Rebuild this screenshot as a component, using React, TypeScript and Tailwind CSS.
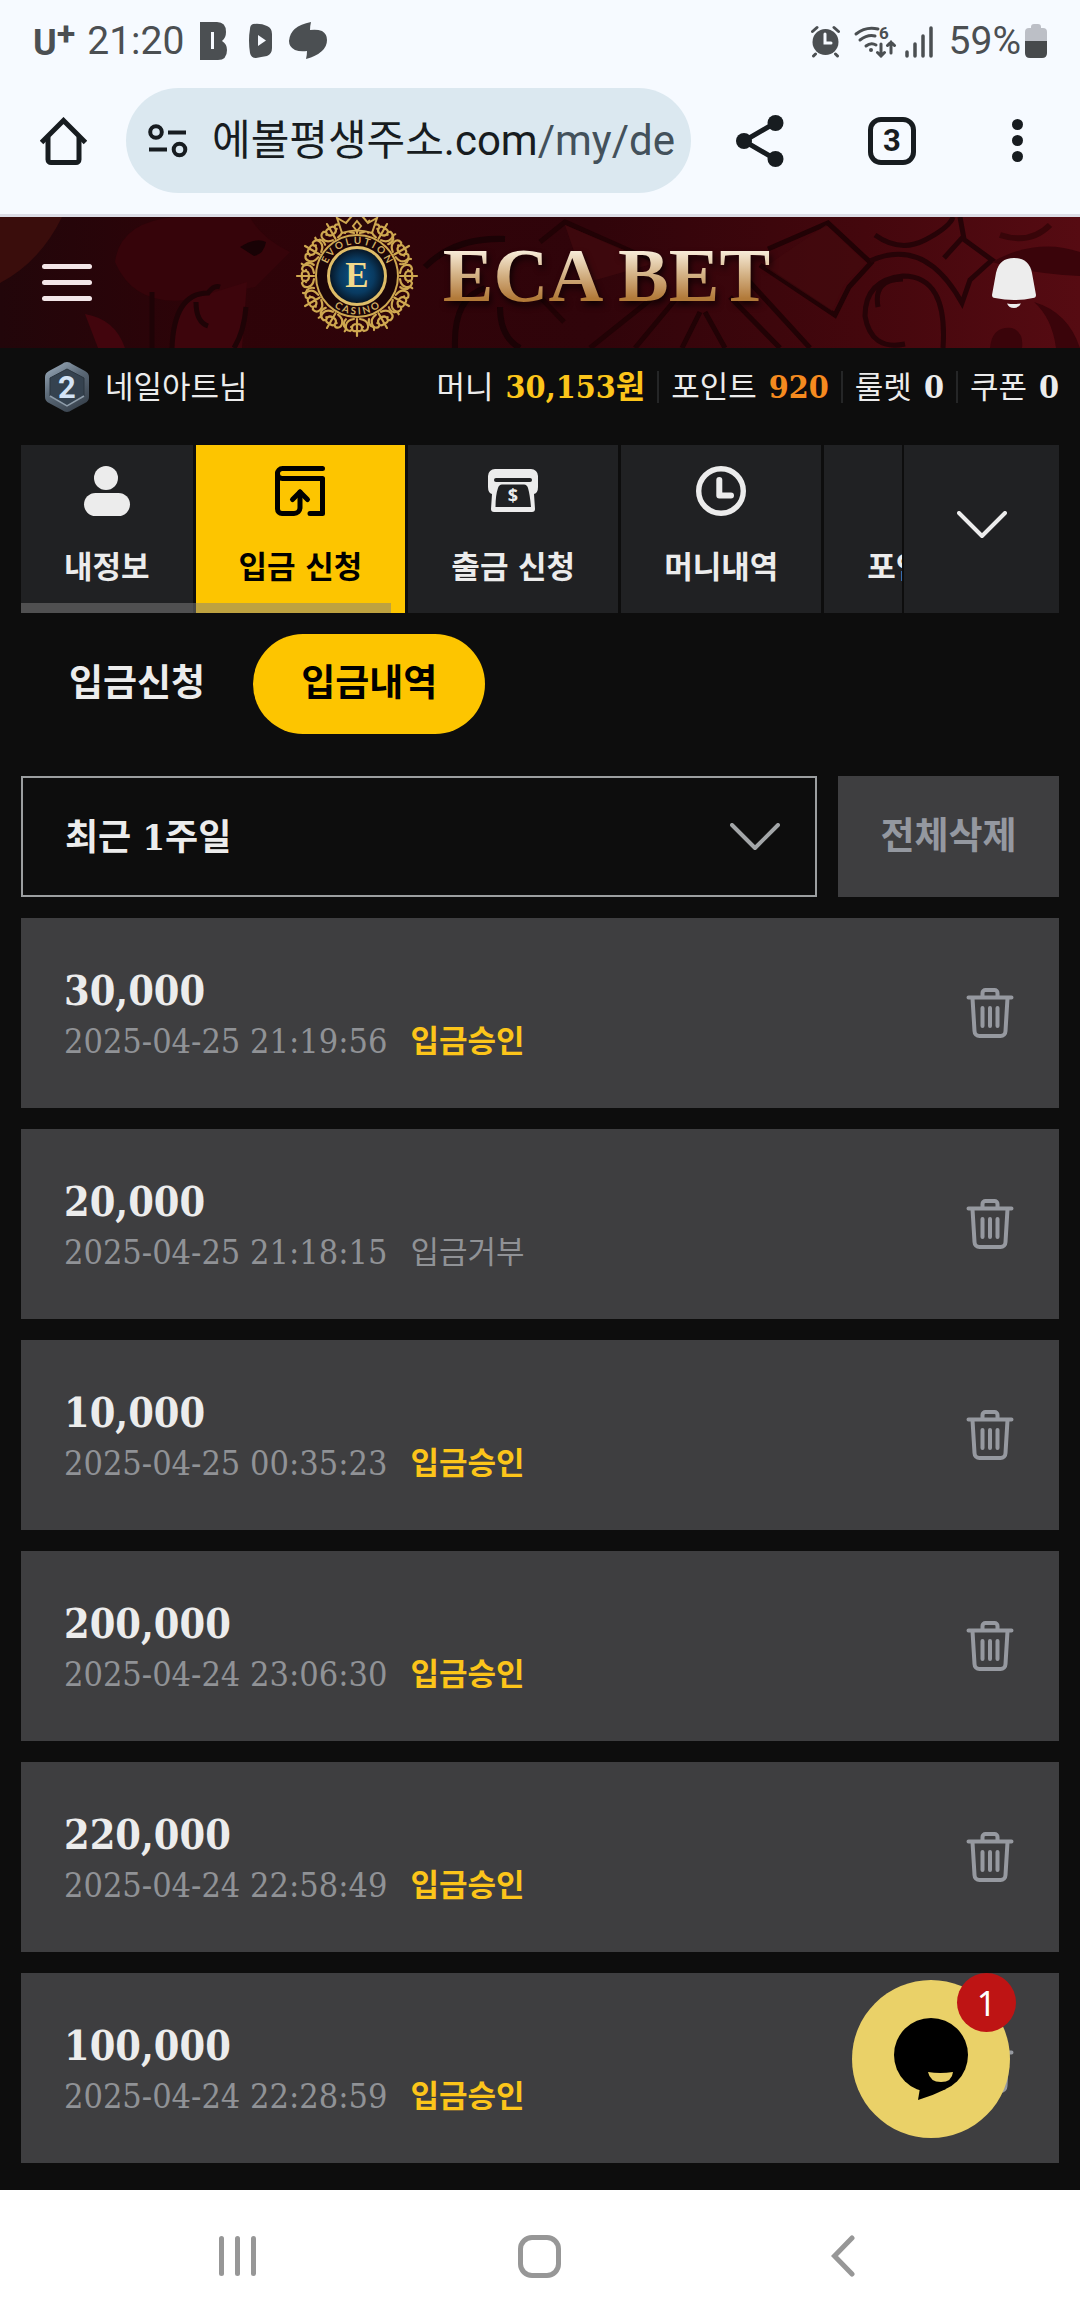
import type { ReactNode } from 'react';

interface Deposit {
  amount: string;
  date: string;
  approved: boolean;
}

interface Tab {
  label: string;
  icon?: ReactNode;
  active?: boolean;
}

const deposits: Deposit[] = [
  { amount: '30,000', date: '2025-04-25 21:19:56', approved: true },
  { amount: '20,000', date: '2025-04-25 21:18:15', approved: false },
  { amount: '10,000', date: '2025-04-25 00:35:23', approved: true },
  { amount: '200,000', date: '2025-04-24 23:06:30', approved: true },
  { amount: '220,000', date: '2025-04-24 22:58:49', approved: true },
  { amount: '100,000', date: '2025-04-24 22:28:59', approved: true },
];

const balances = [
  { label: '머니', value: '30,153원', color: 'text-[#fcc51a]' },
  { label: '포인트', value: '920', color: 'text-[#f58a1f]' },
  { label: '룰렛', value: '0', color: 'text-[#ececec]' },
  { label: '쿠폰', value: '0', color: 'text-[#ececec]' },
];

function PersonIcon() {
  return (
    <svg width="50" height="50" viewBox="0 0 50 50" fill="currentColor" aria-hidden="true">
      <circle cx="24" cy="12" r="12" />
      <rect x="2" y="27" width="46" height="23" rx="11.5" />
    </svg>
  );
}

function DepositIcon() {
  return (
    <svg width="50" height="50" viewBox="0 0 50 50" fill="none" stroke="currentColor" strokeWidth="5" strokeLinecap="round" strokeLinejoin="round" aria-hidden="true">
      <path d="M47.5 2.5H7.5a5 5 0 0 0 0 10h40v35H35" />
      <path d="M2.5 7.5V43a4.5 4.5 0 0 0 4.5 4.5h12a6 6 0 0 0 6-6V26" />
      <path d="M17.5 33.5L25 26l7.5 7.5" />
    </svg>
  );
}

function WithdrawIcon() {
  return (
    <svg width="50" height="50" viewBox="0 0 50 50" aria-hidden="true">
      <path d="M7 3h36a7 7 0 0 1 7 7v11q0 6-4 7l1 15a3 3 0 0 1-3 3H6a3 3 0 0 1-3-3l1-15q-4-1-4-7V10a7 7 0 0 1 7-7z" fill="currentColor" />
      <rect x="6" y="12" width="38" height="4" rx="2" fill="#202123" />
      <path d="M14 18.5h22q3 0 4 3.5 2 7 3 19H7.5q0-12 2.5-19 1-3.5 4-3.5z" fill="#202123" />
      <text x="25" y="36" textAnchor="middle" fill="currentColor" className="font-['Open_Sans',sans-serif] text-[18px] font-bold">$</text>
    </svg>
  );
}

function ClockIcon() {
  return (
    <svg width="50" height="50" viewBox="0 0 50 50" fill="none" stroke="currentColor" strokeLinecap="round" strokeLinejoin="round" aria-hidden="true">
      <circle cx="25" cy="25" r="22.3" strokeWidth="5.4" />
      <path d="M23.3 14v15.5H35" strokeWidth="6" />
    </svg>
  );
}

function ChevronDown() {
  return (
    <svg width="50" height="28" viewBox="0 0 50 28" fill="none" stroke="currentColor" strokeWidth="4" strokeLinecap="round" strokeLinejoin="round" aria-hidden="true">
      <path d="M2 2l23 23L48 2" />
    </svg>
  );
}

function TrashIcon() {
  return (
    <svg width="48" height="50" viewBox="0 0 48 50" fill="none" stroke="currentColor" strokeWidth="4" strokeLinecap="round" strokeLinejoin="round" aria-hidden="true">
      <path d="M2.5 9.5h43M16.5 9V5a3 3 0 0 1 3-3h9a3 3 0 0 1 3 3v4" />
      <path d="M6.5 10l2 33a5 5 0 0 0 5 5h21a5 5 0 0 0 5-5l2-33M16.5 20v18M24 20v18M31.5 20v18" />
    </svg>
  );
}

const tabs: Tab[] = [
  { label: '내정보', icon: <PersonIcon /> },
  { label: '입금 신청', icon: <DepositIcon />, active: true },
  { label: '출금 신청', icon: <WithdrawIcon /> },
  { label: '머니내역', icon: <ClockIcon /> },
  { label: '포인트내역' },
];

function StatusBar() {
  return (
    <div className="flex h-[82px] items-center justify-between px-[33px] text-[39px] leading-none text-[#4b4f52]">
      <div className="flex items-center">
        <span className="mt-1 text-[36px] font-bold">U</span>
        <span className="-mt-4 mr-3 text-[34px] font-bold">+</span>
        <span>21:20</span>
        <svg className="ml-4" width="128" height="38" viewBox="0 0 128 38" fill="currentColor" aria-hidden="true">
          <path fillRule="evenodd" d="M0 0h17q9 0 9 10 0 6-4 9 5 3 5 9 0 10-9 10H0zM11 10v17h3V10z" />
          <path fillRule="evenodd" d="M53 2q8-1 14 2 5 2 5 8v14q0 6-5 8-6 1-11 2-5 0-6-5-2-13 0-24 0-4 3-5zM58 13v11l8-5.5z" />
          <path d="M111 0q-1 4-1 8 7-1 12 1 5 3 5 9 0 13-21 19 1-4 1-8-7 1-12-1-6-3-6-9 1-15 22-19z" />
        </svg>
      </div>
      <div className="flex items-center">
        <svg className="mr-[15px]" width="124" height="34" viewBox="0 0 124 34" fill="none" stroke="currentColor" strokeWidth="3" strokeLinecap="round" aria-hidden="true">
          <circle cx="15.5" cy="18" r="13" fill="currentColor" stroke="none" />
          <path d="M2.5 7.5L7 3.5M24 3.5l4.5 4M5.5 30l-2 2M25.5 30l2 2" />
          <path d="M15 10v9h6" stroke="#f6faff" />
          <path d="M46 10q10-8 22-5M50 16q8-6 15-4M56 22q5-4 10-1" />
          <circle cx="61" cy="26" r="2" fill="currentColor" stroke="none" />
          <text x="69" y="15" fill="currentColor" stroke="none" className="font-[Roboto,sans-serif] text-[17px] font-bold">6</text>
          <path d="M71 20v12M67.5 28.5l3.5 3.5 3.5-3.5M81 29V18M77.5 21.5L81 18l3.5 3.5" />
          <path d="M97 28v4M105 20v12M113 12v20M121 4v28" strokeWidth="3.5" />
        </svg>
        <span>59%</span>
        <svg className="ml-1" width="22" height="34" viewBox="0 0 22 34" aria-hidden="true">
          <path d="M6 3q0-3 3-3h4q3 0 3 3v1h2q4 0 4 4v9H0V8q0-4 4-4h2z" fill="#bcbfc6" />
          <path d="M0 17h22v12q0 5-5 5H5q-5 0-5-5z" fill="#474a4c" />
        </svg>
      </div>
    </div>
  );
}

function AddressBar() {
  return (
    <div className="flex items-center border-b-[3px] border-[#dcdde6] pb-[21px] pl-10 pt-[6px] text-[#171c20]">
      <button type="button" aria-label="홈" className="mr-[39px] shrink-0">
        <svg width="47" height="48" viewBox="0 0 47 48" fill="none" stroke="currentColor" strokeWidth="5" aria-hidden="true">
          <path d="M1.5 25.5l22-22 22 22" />
          <path d="M8 20v22.5a3 3 0 0 0 3 3h25a3 3 0 0 0 3-3V20" />
        </svg>
      </button>
      <button type="button" className="flex h-[105px] min-w-0 flex-1 items-center overflow-hidden rounded-full bg-[#dbe8f0] pl-[22px] text-left">
        <svg className="mr-6 shrink-0" width="40" height="34" viewBox="0 0 40 34" fill="none" stroke="currentColor" strokeWidth="4" aria-hidden="true">
          <circle cx="8" cy="8" r="5.8" />
          <path d="M20 8.5h18M1 25.5h18" />
          <circle cx="31.5" cy="25.5" r="5.8" />
        </svg>
        <span className="whitespace-nowrap text-[42px] leading-[60px]">
          에볼평생주소.com<span className="text-[#43515b]">/my/de</span>
        </span>
      </button>
      <button type="button" aria-label="공유" className="ml-[45px] shrink-0">
        <svg width="48" height="52" viewBox="0 0 48 52" fill="currentColor" aria-hidden="true">
          <path d="M39 8L8 26l31 18" fill="none" stroke="currentColor" strokeWidth="5" />
          <circle cx="8" cy="26" r="8" />
          <circle cx="39.5" cy="8" r="8" />
          <circle cx="39.5" cy="44" r="8" />
        </svg>
      </button>
      <button type="button" aria-label="탭 3개" className="ml-[84px] flex size-12 shrink-0 items-center justify-center rounded-[13px] border-[5px] border-current text-[31px] font-bold leading-none">
        3
      </button>
      <button type="button" aria-label="더보기" className="ml-[96px] mr-[57px] flex shrink-0 flex-col gap-[5px]">
        <span className="size-[11px] rounded-full bg-current" />
        <span className="size-[11px] rounded-full bg-current" />
        <span className="size-[11px] rounded-full bg-current" />
      </button>
    </div>
  );
}

function BannerArt() {
  return (
    <svg className="absolute inset-0 size-full" viewBox="0 0 1080 131" preserveAspectRatio="xMidYMid slice" aria-hidden="true">
      <defs>
        <linearGradient id="banner" x1="0" x2="1" y1="0" y2="0">
          <stop offset="0" stopColor="#22060a" />
          <stop offset="0.2" stopColor="#2e0308" />
          <stop offset="0.55" stopColor="#30040a" />
          <stop offset="0.8" stopColor="#44070d" />
          <stop offset="1" stopColor="#560b12" />
        </linearGradient>
      </defs>
      <rect width="1080" height="131" fill="url(#banner)" />
      <path d="M0 0h62Q40 45 0 66z" fill="#3a0d0c" />
      <path d="M115 45q5-40 60-45h75q10 20 40 35l-35 35-60 12q-60 10-80-37z" fill="#36040a" />
      <path d="M172 131q5-50 30-52l45-14-5 66z" fill="#3d050c" />
      <path d="M85 97q30 5 40 34H98z" fill="#42050d" />
      <path d="M172 131q2-55 36-55 6-8 12-6M152 75v56M246 90q-2 25-12 41M196 85q0 20 12 24" fill="none" stroke="#1e0306" strokeWidth="5" />
      <path d="M240 30q16-10 26-5-2 12-12 14z" fill="#180205" />
      <path d="M425 50q30-30 80-28M455 131q-2-50 30-60M500 90q0 30 20 41" fill="none" stroke="#1b0205" strokeWidth="6" />
      <path d="M540 25l25-20 90 40M760 48l75 50 14-28 22-24L828 6l-60 26M540 80l24 25M590 131l65-52M635 131l40-48M730 80l50 51M745 60l65 71M700 95l-18 36M705 95l20 36" fill="none" stroke="#210205" strokeWidth="5" />
      <path d="M565 8l90 38-70 20zM765 50l67 44 12-26 22-22-40-38z" fill="#430a0e" opacity="0.7" />
      <path d="M870 44q55-25 92 42l8-23 22-20-30-22-18 20M943 131q5-72-40-72-38 4-38 40 6 35 40 28M878 90q-5-28 25-28M875 18q25 18 50 5t28-23M960 0l4 22" fill="none" stroke="#260307" strokeWidth="5" />
      <path d="M992 45q45-25 88-10v24q-50-2-88-14z" fill="#3a040a" />
      <path d="M1034 85q34 10 46 46h-24q-4-30-22-46zM990 131q2-22 22-20 12 4 10 20z" fill="#3a040a" />
      <path d="M1000 18q30 10 50-10" fill="none" stroke="#380509" strokeWidth="6" />
    </svg>
  );
}

function Emblem() {
  const spokes = Array.from({ length: 12 }, (_, i) => i * 30);
  return (
    <svg className="shrink-0" width="124" height="121" viewBox="-62 -59 124 121" fill="none" stroke="#cfa850" strokeLinecap="round" aria-hidden="true">
      <defs>
        <radialGradient id="core">
          <stop offset="0" stopColor="#0b568c" />
          <stop offset="0.6" stopColor="#093a60" />
          <stop offset="1" stopColor="#07121f" />
        </radialGradient>
        <path id="arcTop" d="M-32 0A32 32 0 0 1 32 0" />
        <path id="arcBottom" d="M-38.500 0A38.500 38.500 0 0 0 38.500 0" />
      </defs>
      {spokes.map((angle) => (
        <g key={angle} transform={`rotate(${angle})`} strokeWidth="2.2">
          <path d="M0-60v17M0-55q-5-1-5 3t5 4M0-55q5-1 5 3t-5 4M-3-43q-7-1-8-6t4-6q4 2 1 4M3-43q7-1 8-6t-4-6q-4 2-1 4" />
          <path d="M-12-43q1-4-2-7M-14-50q-4-1-3-4" />
        </g>
      ))}
      <circle r="41" fill="#1c0508" strokeWidth="2" />
      <path d="M-15-43l-5-15 9 5L-6-59l6-5 6 5 5 6 9-5-5 15q-15-5-30 0z" fill="#2a0608" strokeWidth="2" />
      <path d="M0-55l4 5-4 5-4-5z" strokeWidth="2" />
      <circle r="28.5" fill="url(#core)" stroke="#dfbd68" strokeWidth="3" />
      <g fill="#d1ae62" stroke="none" className="font-[Lato,sans-serif] text-[10px] font-bold">
        <text textAnchor="middle"><textPath href="#arcTop" startOffset="50%">E V O L U T I O N</textPath></text>
        <text textAnchor="middle"><textPath href="#arcBottom" startOffset="50%">C A S I N O</textPath></text>
      </g>
      <text y="11" textAnchor="middle" fill="#f3d98c" stroke="none" className="font-['Liberation_Serif',serif] text-[35px] font-bold">E</text>
    </svg>
  );
}

function SiteHeader() {
  return (
    <header className="relative">
      <BannerArt />
      <div className="relative flex h-[131px] items-center justify-between pl-[42px] pr-[33px]">
        <button type="button" aria-label="메뉴" className="flex w-[50px] flex-col gap-[11px]">
          <span className="h-[5px] w-full rounded-full bg-[#f3e6e8]" />
          <span className="h-[5px] w-full rounded-full bg-[#f3e6e8]" />
          <span className="h-[5px] w-full rounded-full bg-[#f3e6e8]" />
        </button>
        <a href="#home" className="flex items-start self-start pr-2">
          <Emblem />
          <span className="ml-6 bg-linear-to-b from-[#f6ead6] from-30% via-[#d3b184] via-50% to-[#b27a39] to-70% bg-clip-text font-['Liberation_Serif',serif] text-[76px] font-bold leading-[116px] text-transparent drop-shadow-[2px_4px_3px_rgba(0,0,0,0.7)]">
            ECA BET
          </span>
        </a>
        <button type="button" aria-label="알림" className="flex w-[66px] justify-center">
          <svg width="44" height="50" viewBox="0 0 44 50" fill="#ededed" aria-hidden="true">
            <path d="M22 0q15 0 18 15l4 22q0 3-3 3-19 4-38 0-3 0-3-3l4-22Q7 0 22 0z" />
            <path d="M15 45.5q7 1 14 0-2 4.5-7 4.5t-7-4.5z" />
          </svg>
        </button>
      </div>
    </header>
  );
}

function LevelBadge() {
  return (
    <svg className="mr-4 shrink-0" width="44" height="50" viewBox="0 0 44 50" aria-hidden="true">
      <defs>
        <linearGradient id="badge" x1="0" y1="0" x2="0.6" y2="1">
          <stop offset="0" stopColor="#a2b2c2" />
          <stop offset="0.5" stopColor="#5d6b79" />
          <stop offset="1" stopColor="#3a444f" />
        </linearGradient>
      </defs>
      <path d="M22 0q3 0 5 2l13 7q4 2 4 6v20q0 4-4 6l-13 7q-5 4-10 0L4 41q-4-2-4-6V15q0-4 4-6l13-7q2-2 5-2z" fill="url(#badge)" />
      <path d="M22 7l17 9v18l-17 10L5 34V16z" fill="#35424f" stroke="#2a343e" strokeWidth="1" />
      <path d="M39 34L22 44 5 34" fill="none" stroke="#8f9daa" strokeWidth="1.5" />
      <text x="22" y="36" textAnchor="middle" fill="#d3e3f5" className="font-['Liberation_Sans_Narrow',Roboto,sans-serif] text-[31px] font-bold">2</text>
    </svg>
  );
}

function BalanceRow() {
  return (
    <div className="flex h-[77px] items-center justify-between whitespace-nowrap pl-[45px] pr-[21px] text-[31px] leading-10">
      <div className="flex items-center">
        <LevelBadge />
        <span>네일아트님</span>
      </div>
      <dl className="flex items-center">
        {balances.map(({ label, value, color }) => (
          <div key={label} className="flex h-8 items-center gap-3 border-l-2 border-[#252627] px-3 first:border-l-0 last:pr-0">
            <dt>{label}</dt>
            <dd className={`text-[32px] font-bold ${color}`}>{value}</dd>
          </div>
        ))}
      </dl>
    </div>
  );
}

function TabBar() {
  return (
    <nav className="mx-[21px] mt-5 flex h-[168px] gap-[2px]">
      <div className="relative flex min-w-0 flex-1 gap-[3px] overflow-hidden">
        {tabs.map(({ label, icon, active }) => (
          <a
            key={label}
            href="#tab"
            className={`flex shrink-0 flex-col items-center whitespace-nowrap px-[43px] pt-[21px] text-[31px] font-bold leading-10 ${active ? 'bg-[#fdc500] text-black' : 'bg-[#202123]'}`}
          >
            <span className="mb-[31px] h-[50px]">{icon}</span>
            {label}
          </a>
        ))}
        <div className="absolute bottom-0 left-0 h-[10px] w-[42%] bg-[#808080]/50" />
      </div>
      <button type="button" aria-label="펼치기" className="flex w-[155px] items-center justify-center bg-[#202123] pb-2">
        <ChevronDown />
      </button>
    </nav>
  );
}

function DepositCard({ amount, date, approved }: Deposit) {
  return (
    <li className="flex items-center justify-between bg-[#3e3e40] pl-[43px] pr-[45px]">
      <div className="pb-[42px] pt-12">
        <p className="text-[41px] font-bold leading-[50px]">{amount}</p>
        <p className="flex gap-[23px] text-[34px] leading-[50px] text-[#909296]">
          <span>{date}</span>
          <span className={`text-[31px] ${approved ? 'font-bold text-[#fcc51a]' : ''}`}>
            {approved ? '입금승인' : '입금거부'}
          </span>
        </p>
      </div>
      <button type="button" aria-label="삭제" className="text-[#9699a0]">
        <TrashIcon />
      </button>
    </li>
  );
}

function ChatButton() {
  return (
    <button type="button" aria-label="채팅" className="absolute bottom-[178px] right-[70px] size-[158px] rounded-full bg-[#ead168]">
      <svg className="mx-auto" width="74" height="82" viewBox="0 0 74 82" aria-hidden="true">
        <circle cx="37" cy="37" r="37" />
        <path d="M26 70l-2 12q14-4 28-11z" />
        <path d="M34 54q12 2 25 0-1 10-12 10T34 54z" fill="#ead168" />
      </svg>
      <span className="absolute -right-[6px] -top-[7px] flex size-[59px] items-center justify-center rounded-full bg-[#be1414] font-['Noto_Sans',sans-serif] text-[34px] leading-none text-white">
        1
      </span>
    </button>
  );
}

function SystemNav() {
  return (
    <nav className="grid h-[126px] grid-cols-3 place-items-center bg-white px-[86px] pt-[6px] text-[#979797]">
      <button type="button" aria-label="최근 앱" className="flex gap-[11px]">
        <span className="h-10 w-[5px] rounded-full bg-current" />
        <span className="h-10 w-[5px] rounded-full bg-current" />
        <span className="h-10 w-[5px] rounded-full bg-current" />
      </button>
      <button type="button" aria-label="홈 화면" className="size-[43px] rounded-[14px] border-[5px] border-current" />
      <button type="button" aria-label="뒤로">
        <svg width="24" height="42" viewBox="0 0 24 42" fill="none" stroke="currentColor" strokeWidth="5" strokeLinecap="round" aria-hidden="true">
          <path d="M21 3L3.5 21 21 39" />
        </svg>
      </button>
    </nav>
  );
}

export default function App() {
  return (
    <div className="relative flex min-h-screen flex-col bg-[#0d0d0d] font-['DejaVu_Serif_Condensed','Noto_Sans_CJK_KR',serif] text-[#ececec]">
      <div className="bg-[#f6faff] font-[Roboto,'Noto_Sans_CJK_KR',sans-serif]">
        <StatusBar />
        <AddressBar />
      </div>
      <SiteHeader />
      <main className="flex-1">
        <BalanceRow />
        <TabBar />
        <div className="mx-[21px] mt-[21px] flex text-[37px] font-bold">
          <button type="button" className="h-[100px] px-12">입금신청</button>
          <button type="button" className="h-[100px] rounded-full bg-[#fdc500] px-12 text-black">입금내역</button>
        </div>
        <div className="mx-[21px] mt-[42px] flex h-[121px] gap-[21px] text-[36px] font-bold">
          <div className="relative flex-1">
            <select aria-label="조회 기간" className="size-full appearance-none border-2 border-[#9b9ea0] bg-transparent px-[42px]">
              <option>최근 1주일</option>
            </select>
            <span className="pointer-events-none absolute inset-y-0 right-[37px] flex items-center text-[#a3a6a8]">
              <ChevronDown />
            </span>
          </div>
          <button type="button" className="w-[221px] bg-[#3e3e40] text-[37px] text-[#9498a0]">전체삭제</button>
        </div>
        <ul className="mx-[21px] mb-6 mt-[21px] flex flex-col gap-[21px]">
          {deposits.map((deposit) => (
            <DepositCard key={deposit.date} {...deposit} />
          ))}
        </ul>
      </main>
      <SystemNav />
      <ChatButton />
    </div>
  );
}
